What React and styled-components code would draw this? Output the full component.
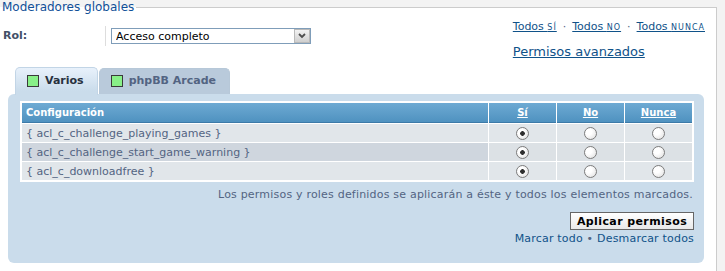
import React from "react";
import styled, { createGlobalStyle } from "styled-components";

const GlobalStyle = createGlobalStyle`
  html, body {
    margin: 0;
    padding: 0;
    background: #f3f3f3;
  }
  body {
    font-family: "DejaVu Sans", Verdana, sans-serif;
    font-size: 11px;
    color: #536482;
  }
`;

const Fieldset = styled.fieldset`
  margin: 0 8px 0 0;
  padding: 0 0 20px 0;
  border: 1px solid #cccccc;
  border-left: none;
  border-bottom: none;
  background: #ffffff;
  min-width: 0;
`;

const Legend = styled.legend`
  padding: 0 2px;
  margin-left: 0;
  font-family: "DejaVu Sans", Verdana, sans-serif;
  font-size: 12px;
  line-height: 15px;
  color: #115098;
`;

const TopRow = styled.div`
  display: flex;
  justify-content: space-between;
  align-items: flex-start;
  height: 46px;
`;

const Dl = styled.dl`
  display: flex;
  margin: 11px 0 0 0;
`;

const Dt = styled.dt`
  width: 105px;
  padding-left: 3px;
  box-sizing: border-box;
  font-weight: bold;
  font-size: 11px;
  color: #425067;
  line-height: 20px;
`;

const Dd = styled.dd`
  margin: 0;
  border-left: 1px solid #dddddd;
  padding: 2px 0 2px 5px;
  height: 16px;
`;

const SelectWrap = styled.div`
  position: relative;
  width: 200px;
  height: 16px;
`;

const Select = styled.select`
  appearance: none;
  width: 200px;
  height: 16px;
  margin: 0;
  padding: 0 0 0 4px;
  border: 1px solid #7f9db9;
  border-radius: 0;
  background: #ffffff;
  font-family: "DejaVu Sans", Verdana, sans-serif;
  font-size: 11px;
  color: #000000;
  outline: none;
`;

const Arrow = styled.span`
  position: absolute;
  top: 1px;
  right: 1px;
  width: 16px;
  height: 14px;
  box-sizing: border-box;
  border: 1px solid #b9b9b9;
  background: linear-gradient(#f2f2f2, #cfcfcf);
  display: flex;
  align-items: center;
  justify-content: center;
  pointer-events: none;
`;

const Links = styled.div`
  padding: 5px 11px 0 0;
  display: flex;
  flex-direction: column;
  align-items: flex-start;
  gap: 10px;
`;

const QuickLinks = styled.div`
  font-size: 11px;
  line-height: 14px;
  color: #536482;
  white-space: nowrap;
`;

const A = styled.a`
  color: #105289;
  text-decoration: ${(p) => (p.plain ? "none" : "underline")};
  font-size: ${(p) => p.size || "inherit"};
  line-height: ${(p) => (p.size ? "16px" : "inherit")};
  cursor: pointer;
`;

const Caps = styled.span`
  font-variant: small-caps;
  font-size: 11px;
  letter-spacing: 1px;
`;

const Sep = styled.span`
  margin: 0 6px;
  color: #536482;
`;

const Tabs = styled.div`
  display: flex;
  gap: 1px;
  margin: 6px 0 -1px 15px;
  position: relative;
  z-index: 1;
`;

const Tab = styled.div`
  display: flex;
  align-items: center;
  gap: 6px;
  box-sizing: border-box;
  height: ${(p) => (p.active ? "28px" : "26px")};
  margin-top: ${(p) => (p.active ? "0" : "1px")};
  padding: 0 13px 2px 11px;
  border: 1px solid ${(p) => (p.active ? "#c2d5e6" : "#b7c8d8")};
  border-bottom: none;
  border-radius: 5px 5px 0 0;
  background: ${(p) =>
    p.active ? "linear-gradient(#e8f1fb, #cadceb 85%)" : "#b9cadb"};
  font-size: 11px;
  font-weight: bold;
  color: ${(p) => (p.active ? "#28313f" : "#536482")};
`;

const Swatch = styled.span`
  width: 10px;
  height: 10px;
  border: 1px solid #3a3a3a;
  background: #88f088;
`;

const Panel = styled.div`
  margin: 0 12px 0 8px;
  padding: 7px 10px 17px 12px;
  background: #cadceb;
  border-radius: 6px;
`;

const Table = styled.table`
  width: 674px;
  table-layout: fixed;
  border-collapse: separate;
  border-spacing: 1px;
  border: 1px solid #ffffff;
  background: #ffffff;
`;

const Th = styled.th`
  height: 20px;
  padding: 0 4px;
  box-sizing: border-box;
  width: ${(p) => p.w}px;
  text-align: ${(p) => (p.center ? "center" : "left")};
  background: linear-gradient(#6eaad3, #4f92c0);
  border-bottom: 1px solid #3c7aa8;
  color: #ffffff;
  font-size: 10px;
  font-weight: bold;
  text-decoration: ${(p) => (p.center ? "underline" : "none")};
`;

const Td = styled.td`
  height: 18px;
  padding: 0 4px;
  box-sizing: border-box;
  text-align: ${(p) => (p.center ? "center" : "left")};
  vertical-align: middle;
  background: ${(p) => p.bg};
  color: #536482;
  font-size: 11px;
  white-space: nowrap;
`;

const Radio = styled.input.attrs({ type: "radio" })`
  appearance: none;
  display: block;
  margin: 0 auto;
  width: 13px;
  height: 13px;
  border: 1px solid #7c7c7c;
  border-radius: 50%;
  background: radial-gradient(circle at 35% 35%, #ffffff 30%, #dcdcdc 100%);
  &:checked {
    background: radial-gradient(circle, #2e2e2e 0 2px, transparent 2.6px),
      radial-gradient(circle at 35% 35%, #ffffff 30%, #dcdcdc 100%);
  }
`;

const Note = styled.p`
  margin: 6px 1px 0 0;
  text-align: right;
  font-size: 11px;
  line-height: 13px;
  letter-spacing: 0.2px;
`;

const Actions = styled.div`
  margin-top: 11px;
  display: flex;
  flex-direction: column;
  align-items: flex-end;
  gap: 2px;
`;

const Button = styled.button`
  width: 124px;
  height: 18px;
  padding: 0;
  border: 1px solid #666666;
  background: linear-gradient(#ffffff, #e9e9e9);
  font-family: "DejaVu Sans", Verdana, sans-serif;
  font-size: 11px;
  font-weight: bold;
  letter-spacing: 0.4px;
  color: #000000;
`;

const Marks = styled.div`
  font-size: 11px;
  line-height: 14px;
  letter-spacing: 0.2px;
  color: #536482;
`;

const rows = [
  { name: "acl_c_challenge_playing_games", main: "#e1e6ea", rest: "#e1e6ea" },
  { name: "acl_c_challenge_start_game_warning", main: "#cfd6de", rest: "#dce1e5" },
  { name: "acl_c_downloadfree", main: "#e1e6ea", rest: "#e1e6ea" },
];

export default function App() {
  return (
    <>
      <GlobalStyle />
      <Fieldset>
        <Legend>Moderadores globales</Legend>
        <TopRow>
          <Dl>
            <Dt>Rol:</Dt>
            <Dd>
              <SelectWrap>
                <Select defaultValue="full">
                  <option value="full">Acceso completo</option>
                </Select>
                <Arrow>
                  <svg width="8" height="6" viewBox="0 0 8 6">
                    <path d="M1 1 L4 4 L7 1" fill="none" stroke="#4d4d4d" strokeWidth="1.8" />
                  </svg>
                </Arrow>
              </SelectWrap>
            </Dd>
          </Dl>
          <Links>
            <QuickLinks>
              <A>Todos <Caps>sí</Caps></A>
              <Sep>·</Sep>
              <A>Todos <Caps>no</Caps></A>
              <Sep>·</Sep>
              <A>Todos <Caps>nunca</Caps></A>
            </QuickLinks>
            <A size="13px">Permisos avanzados</A>
          </Links>
        </TopRow>

        <Tabs>
          <Tab active>
            <Swatch />
            Varios
          </Tab>
          <Tab>
            <Swatch />
            phpBB Arcade
          </Tab>
        </Tabs>

        <Panel>
          <Table>
            <thead>
              <tr>
                <Th w={466}>Configuración</Th>
                <Th w={67} center>Sí</Th>
                <Th w={67} center>No</Th>
                <Th w={67} center>Nunca</Th>
              </tr>
            </thead>
            <tbody>
              {rows.map((r) => (
                <tr key={r.name}>
                  <Td bg={r.main}>{`{ ${r.name} }`}</Td>
                  <Td bg={r.rest} center>
                    <Radio name={r.name} defaultChecked />
                  </Td>
                  <Td bg={r.rest} center>
                    <Radio name={r.name} />
                  </Td>
                  <Td bg={r.rest} center>
                    <Radio name={r.name} />
                  </Td>
                </tr>
              ))}
            </tbody>
          </Table>
          <Note>
            Los permisos y roles definidos se aplicarán a éste y todos los elementos marcados.
          </Note>
          <Actions>
            <Button>Aplicar permisos</Button>
            <Marks>
              <A plain>Marcar todo</A> • <A plain>Desmarcar todos</A>
            </Marks>
          </Actions>
        </Panel>
      </Fieldset>
    </>
  );
}
